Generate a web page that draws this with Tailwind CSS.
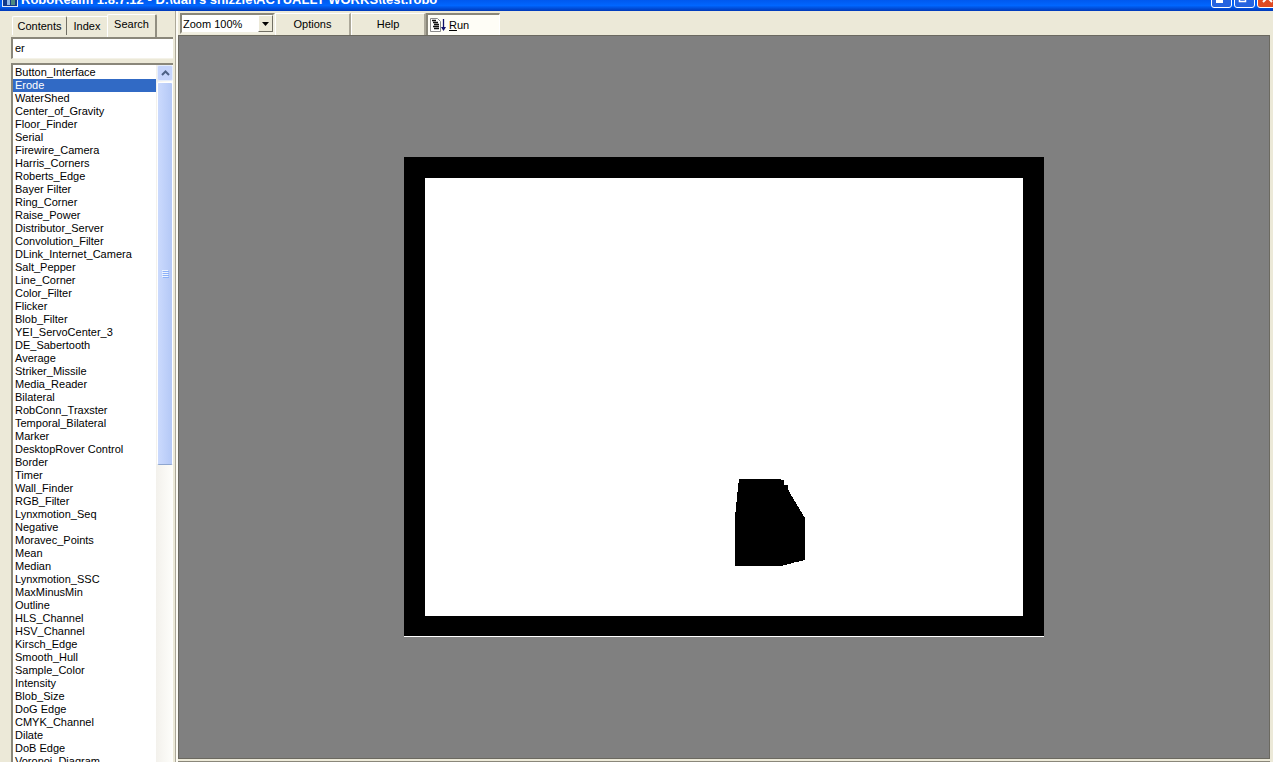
<!DOCTYPE html>
<html lang="en">
<head>
    <meta charset="UTF-8">
    <meta name="viewport" content="width=device-width, initial-scale=1.0">
    <title>RoboRealm</title>
    <script src="https://cdn.jsdelivr.net/npm/@tailwindcss/browser@4"></script>
</head>
<body class="h-screen flex flex-col overflow-hidden bg-[#ece9d8] text-black text-[11px] leading-[13px] font-['Liberation_Sans',Arial,sans-serif]">
    <!-- title bar, scrolled mostly off the top -->
    <header class="h-[11px] shrink-0 flex items-end justify-between overflow-hidden bg-linear-to-b from-[#0058ee] via-[#0066ff] to-[#0038b8]">
        <div class="flex items-end pl-[2px] pb-[4px]">
            <svg class="w-4 h-4 mr-[3px]" viewBox="0 0 16 16">
                <rect width="16" height="16" fill="#dfe8f8"/>
                <rect x="1" y="1" width="14" height="14" fill="#123a8c"/>
                <rect x="5" y="8" width="3" height="6" fill="#8fb8e8"/>
                <rect x="9" y="8" width="4" height="6" fill="#4c8a80"/>
            </svg>
            <h1 class="font-bold text-[13px] leading-[14px] text-white whitespace-nowrap">RoboRealm 1.8.7.12 - D:\dan's shizzle\ACTUALLY WORKS\test.robo</h1>
        </div>
        <div class="flex gap-[2px] pb-[3px] -mr-[5px]">
            <button aria-label="Minimize" class="w-[21px] h-[21px] border border-white rounded-[3px] bg-[#2463e0]">
                <svg class="w-full h-full" viewBox="0 0 19 19"><rect x="4" y="12" width="7" height="3" fill="#fff"/></svg>
            </button>
            <button aria-label="Restore" class="w-[21px] h-[21px] border border-white rounded-[3px] bg-[#2463e0]">
                <svg class="w-full h-full" viewBox="0 0 19 19"><path d="M4.500 8.500h6v5h-6z" fill="none" stroke="#fff" stroke-width="1.500"/></svg>
            </button>
            <button aria-label="Close" class="w-[21px] h-[21px] border border-white rounded-[3px] bg-[#e04a22]">
                <svg class="w-full h-full" viewBox="0 0 19 19"><path d="M5 5l9 9M14 5l-9 9" stroke="#fff" stroke-width="2"/></svg>
            </button>
        </div>
    </header>

    <div class="flex-1 min-h-0 flex">
        <!-- module browser -->
        <aside class="w-[176px] shrink-0 flex flex-col pl-[11px] pr-[2px] border-r border-[#aca899]">
            <div role="tablist" class="flex items-end h-[26px] pt-[3px] pl-[1px]">
                <button role="tab" class="h-[19px] mb-[2px] w-[55px] border-l border-t border-l-white border-t-white border-r border-r-[#716f64] rounded-t-[2px]">Contents</button>
                <button role="tab" class="h-[19px] mb-[2px] w-[40px] border-t border-t-white">Index</button>
                <button role="tab" aria-selected="true" class="h-[23px] w-[50px] pb-[4px] border-l border-t border-l-white border-t-white border-r-2 border-r-[#918e80] rounded-t-[2px]">Search</button>
            </div>
            <input type="text" aria-label="Search modules" value="er" class="block w-full h-[22px] pl-[2px] pb-[2px] bg-white border-t-2 border-l-2 border-t-[#8a877a] border-l-[#8a877a] border-b border-b-[#f4f2e8] outline-none">
            <div class="flex flex-1 min-h-0 mt-[4px] bg-white border-t-2 border-l-2 border-t-[#8a877a] border-l-[#8a877a] overflow-hidden">
                <ul role="listbox" aria-label="Modules" id="modules" class="flex-1 min-w-0 pt-px overflow-hidden whitespace-nowrap">
                    <li role="option" class="pl-[2px]">Button_Interface</li>
                    <li role="option" aria-selected="true" class="pl-[2px] bg-[#316ac5] text-white">Erode</li>
                    <li role="option" class="pl-[2px]">WaterShed</li>
                    <li role="option" class="pl-[2px]">Center_of_Gravity</li>
                    <li role="option" class="pl-[2px]">Floor_Finder</li>
                    <li role="option" class="pl-[2px]">Serial</li>
                    <li role="option" class="pl-[2px]">Firewire_Camera</li>
                    <li role="option" class="pl-[2px]">Harris_Corners</li>
                    <li role="option" class="pl-[2px]">Roberts_Edge</li>
                    <li role="option" class="pl-[2px]">Bayer Filter</li>
                    <li role="option" class="pl-[2px]">Ring_Corner</li>
                    <li role="option" class="pl-[2px]">Raise_Power</li>
                    <li role="option" class="pl-[2px]">Distributor_Server</li>
                    <li role="option" class="pl-[2px]">Convolution_Filter</li>
                    <li role="option" class="pl-[2px]">DLink_Internet_Camera</li>
                    <li role="option" class="pl-[2px]">Salt_Pepper</li>
                    <li role="option" class="pl-[2px]">Line_Corner</li>
                    <li role="option" class="pl-[2px]">Color_Filter</li>
                    <li role="option" class="pl-[2px]">Flicker</li>
                    <li role="option" class="pl-[2px]">Blob_Filter</li>
                    <li role="option" class="pl-[2px]">YEI_ServoCenter_3</li>
                    <li role="option" class="pl-[2px]">DE_Sabertooth</li>
                    <li role="option" class="pl-[2px]">Average</li>
                    <li role="option" class="pl-[2px]">Striker_Missile</li>
                    <li role="option" class="pl-[2px]">Media_Reader</li>
                    <li role="option" class="pl-[2px]">Bilateral</li>
                    <li role="option" class="pl-[2px]">RobConn_Traxster</li>
                    <li role="option" class="pl-[2px]">Temporal_Bilateral</li>
                    <li role="option" class="pl-[2px]">Marker</li>
                    <li role="option" class="pl-[2px]">DesktopRover Control</li>
                    <li role="option" class="pl-[2px]">Border</li>
                    <li role="option" class="pl-[2px]">Timer</li>
                    <li role="option" class="pl-[2px]">Wall_Finder</li>
                    <li role="option" class="pl-[2px]">RGB_Filter</li>
                    <li role="option" class="pl-[2px]">Lynxmotion_Seq</li>
                    <li role="option" class="pl-[2px]">Negative</li>
                    <li role="option" class="pl-[2px]">Moravec_Points</li>
                    <li role="option" class="pl-[2px]">Mean</li>
                    <li role="option" class="pl-[2px]">Median</li>
                    <li role="option" class="pl-[2px]">Lynxmotion_SSC</li>
                    <li role="option" class="pl-[2px]">MaxMinusMin</li>
                    <li role="option" class="pl-[2px]">Outline</li>
                    <li role="option" class="pl-[2px]">HLS_Channel</li>
                    <li role="option" class="pl-[2px]">HSV_Channel</li>
                    <li role="option" class="pl-[2px]">Kirsch_Edge</li>
                    <li role="option" class="pl-[2px]">Smooth_Hull</li>
                    <li role="option" class="pl-[2px]">Sample_Color</li>
                    <li role="option" class="pl-[2px]">Intensity</li>
                    <li role="option" class="pl-[2px]">Blob_Size</li>
                    <li role="option" class="pl-[2px]">DoG Edge</li>
                    <li role="option" class="pl-[2px]">CMYK_Channel</li>
                    <li role="option" class="pl-[2px]">Dilate</li>
                    <li role="option" class="pl-[2px]">DoB Edge</li>
                    <li role="option" class="pl-[2px]">Voronoi_Diagram</li>
                </ul>
                <div class="w-[17px] shrink-0 flex flex-col bg-linear-to-r from-[#f3f1ec] to-[#fefefb] pl-px">
                    <button aria-label="Scroll up" class="w-full h-[16px] shrink-0 flex items-center justify-center bg-[#c6d5fc] border border-[#e6eefc] rounded-[2px]">
                        <svg class="w-[9px] h-[6px]" viewBox="0 0 9 6"><path d="M1 5l3.500-3.500L8 5" fill="none" stroke="#4d6185" stroke-width="2"/></svg>
                    </button>
                    <div class="w-full h-[55%] mt-px flex items-center justify-center bg-linear-to-r from-[#cbdafd] to-[#b4c8f6] border border-white border-b-[#8ea6cf] rounded-[2px]">
                        <svg class="w-[7px] h-[8px]" viewBox="0 0 7 8"><path d="M0 .5h6M0 2.500h6M0 4.500h6M0 6.500h6" stroke="#eef4fe"/><path d="M1 1.500h6M1 3.500h6M1 5.500h6M1 7.500h6" stroke="#8cb0f8"/></svg>
                    </div>
                </div>
            </div>
        </aside>

        <main class="flex-1 min-w-0 flex flex-col border-l-2 border-[#fcfbf5] pr-[3px]">
            <div class="flex h-[24px] shrink-0 pt-[2px] pl-[2px]">
                <div class="relative w-[95px] h-[21px]">
                    <select aria-label="Zoom" class="appearance-none w-full h-full pl-px pt-px bg-white border-2 border-[#f1efe2] border-t-[#8a877a] border-l-[#8a877a] outline-none">
                        <option>Zoom 100%</option>
                        <option>Zoom 200%</option>
                    </select>
                    <span class="absolute right-[2px] top-[2px] w-[15px] h-[17px] flex items-center justify-center bg-[#ece9d8] border border-[#fff] border-r-[#716f64] border-b-[#716f64] pointer-events-none">
                        <svg class="w-[7px] h-[4px]" viewBox="0 0 7 4"><path d="M0 0h7L3.500 4z"/></svg>
                    </span>
                </div>
                <button class="w-[76px] border-t border-l border-t-white border-l-white border-r-2 border-r-[#aca899]">Options</button>
                <button class="w-[75px] border-t border-l border-t-white border-l-white border-r-2 border-r-[#aca899]">Help</button>
                <button class="w-[74px] flex items-center pl-[2px] bg-[#fefdf6] border-t-2 border-l-2 border-t-[#8a877a] border-l-[#8a877a] border-r border-r-white">
                    <svg class="w-[17px] h-[17px] mr-[2px] shrink-0" viewBox="0 0 17 17">
                        <path d="M.5 1.500h7l3 3v10h-10z" fill="#fff" stroke="#8a8a8a"/>
                        <path d="M2 3.500h4M3 5.500h5M4 7.500h5M3 9.500h6M4 11.500h5" stroke="#111" stroke-width="1.300"/>
                        <path d="M13.500 2v10" stroke="#10106c" stroke-width="1.300"/>
                        <path d="M11 10h5l-2.500 4z" fill="#10106c"/>
                    </svg>
                    <span><u>R</u>un</span>
                </button>
            </div>
            <!-- camera view -->
            <div class="flex-1 min-h-0 flex items-center justify-center bg-[#808080] border border-[#6b6960]">
                <svg class="w-[640px] h-[480px] shrink-0" viewBox="0 0 640 480" shape-rendering="crispEdges" role="img" aria-label="Processed image">
                    <rect width="640" height="480" fill="#000"/>
                    <rect x="21" y="21" width="598" height="438" fill="#fff"/>
                    <path d="M335 322h42v1h3v5h4v4l3 6 14 23v42l-8 2-6 1v1l-8 1v1h-48v-49l2-20z"/>
                    <rect y="479" width="640" height="1" fill="#fff"/>
                </svg>
            </div>
            <div class="h-[3px] shrink-0 border-b border-[#8a877a]"></div>
        </main>
    </div>
</body>
</html>
